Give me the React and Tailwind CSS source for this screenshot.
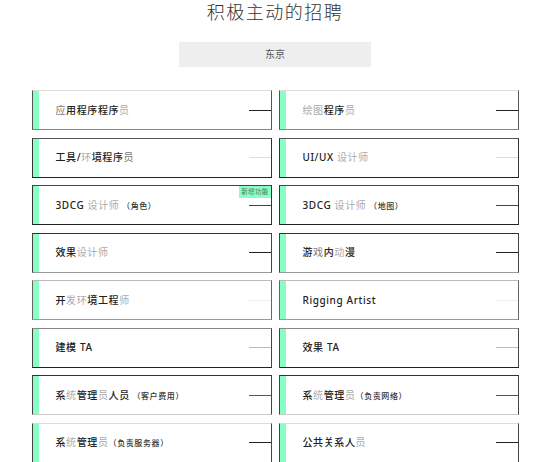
import React from 'react';

const D = 'text-[#222] font-medium';
const M = 'text-[#777]';
const L = 'text-[#aaa]';
const S = 'text-[8px] text-[#333] font-medium';

const jobs = [
  { parts: [['应', M], ['用程序程序', D], ['员', L]], line: 'bg-[#222]', border: 'border-t-[#ddd] border-x-[#555] border-b-[#888]' },
  { parts: [['绘图', L], ['程序', D], ['员', L]], line: 'bg-[#222]', border: 'border-t-[#ddd] border-x-[#555] border-b-[#888]' },
  { parts: [['工具/', D], ['环', L], ['境程序', D], ['员', M]], line: 'bg-[#ddd]', border: 'border-t-[#555] border-x-[#333] border-b-[#222]' },
  { parts: [['UI/UX ', D], ['设计师', L]], line: 'bg-[#ddd]', border: 'border-t-[#555] border-x-[#333] border-b-[#222]' },
  { parts: [['3DCG ', D], ['设计师', L], [' （角色）', S]], line: 'bg-[#444]', border: 'border-t-[#444] border-x-[#333] border-b-[#222]', badge: true },
  { parts: [['3DCG ', D], ['设计师', L], [' （地图）', S]], line: 'bg-[#444]', border: 'border-t-[#444] border-x-[#333] border-b-[#222]' },
  { parts: [['效果', D], ['设计师', L]], line: 'bg-[#222]', border: 'border-t-[#333] border-x-[#444] border-b-[#999]' },
  { parts: [['游', D], ['戏', M], ['内', D], ['动', L], ['漫', D]], line: 'bg-[#222]', border: 'border-t-[#333] border-x-[#444] border-b-[#999]' },
  { parts: [['开', D], ['发环', L], ['境工程', D], ['师', L]], line: 'bg-[#eee]', border: 'border-t-[#bbb] border-x-[#666] border-b-[#999]' },
  { parts: [['Rigging Artist', D]], line: 'bg-[#eee]', border: 'border-t-[#bbb] border-x-[#666] border-b-[#999]' },
  { parts: [['建模 TA', D]], line: 'bg-[#bbb]', border: 'border-t-[#888] border-x-[#444] border-b-[#222]' },
  { parts: [['效果 TA', D]], line: 'bg-[#bbb]', border: 'border-t-[#888] border-x-[#444] border-b-[#222]' },
  { parts: [['系', D], ['统', L], ['管理', D], ['员', L], ['人员', D], [' （客户费用）', S]], line: 'bg-[#555]', border: 'border-t-[#333] border-x-[#444] border-b-[#ccc]' },
  { parts: [['系', D], ['统', L], ['管理', D], ['员', L], ['（负责网络）', S]], line: 'bg-[#555]', border: 'border-t-[#333] border-x-[#444] border-b-[#ccc]' },
  { parts: [['系', D], ['统', L], ['管理', D], ['员', L], ['（负责服务器）', S]], line: 'bg-[#222]', border: 'border-t-[#ddd] border-x-[#444] border-b-[#ddd]' },
  { parts: [['公共关系人', D], ['员', L]], line: 'bg-[#222]', border: 'border-t-[#ddd] border-x-[#444] border-b-[#ddd]' },
];

const JobCard = ({ job }) => (
  <div className={`relative flex items-stretch h-[40px] border bg-white ${job.border}`}>
    <div className="w-[6px] bg-[#88ffc4]" />
    <div className="flex-1 flex items-center pl-[17px] text-[10px] tracking-[0.6px] whitespace-pre">
      <span>
        {job.parts.map(([txt, cls], i) => (
          <span key={i} className={cls}>{txt}</span>
        ))}
      </span>
    </div>
    <div className="flex items-center">
      <div className={`w-[22px] h-px ${job.line}`} />
    </div>
    {job.badge && (
      <span className="absolute top-0 right-0 h-[12px] px-[2px] bg-[#88ffc4] text-[6.5px] leading-[12px] text-[#557766] tracking-[0.3px]">
        新增功能
      </span>
    )}
  </div>
);

export default function App() {
  return (
    <div
      className="w-[550px] h-[462px] overflow-hidden bg-white"
      style={{ fontFamily: '"Noto Sans", "Noto Sans CJK JP", "Noto Sans CJK SC", sans-serif' }}
    >
      <h1 className="text-center text-[18px] leading-[24px] tracking-[1.5px] text-[#333] font-light">
        积极主动的招聘
      </h1>
      <div className="mt-[18px] mx-auto w-[192px] h-[25px] bg-[#eeeeee] flex items-center justify-center text-[10px] text-[#555]">
        东京
      </div>
      <div className="mt-[23px] mx-auto w-[487px] grid grid-cols-2 gap-x-[7px] gap-y-[7.5px]">
        {jobs.map((job, i) => (
          <JobCard key={i} job={job} />
        ))}
      </div>
    </div>
  );
}
